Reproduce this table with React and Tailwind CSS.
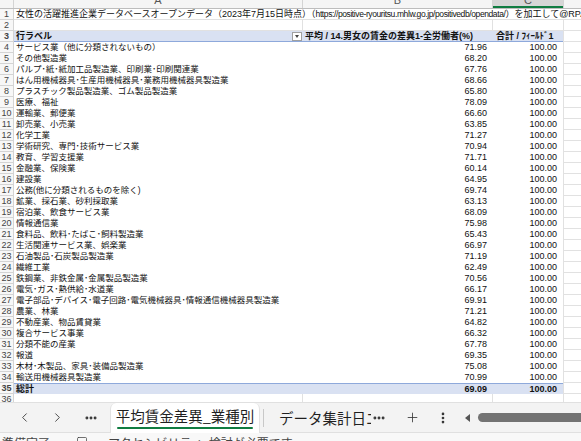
import { ChevronLeft, ChevronRight, Ellipsis, Plus, EllipsisVertical, Square } from 'lucide-react';

const rows = [
  ['サービス業（他に分類されないもの）', '71.96'],
  ['その他製造業', '68.20'],
  ['パルプ・紙・紙加工品製造業、印刷業・印刷関連業', '67.76'],
  ['はん用機械器具・生産用機械器具・業務用機械器具製造業', '68.66'],
  ['プラスチック製品製造業、ゴム製品製造業', '65.80'],
  ['医療、福祉', '78.09'],
  ['運輸業、郵便業', '66.60'],
  ['卸売業、小売業', '63.85'],
  ['化学工業', '71.27'],
  ['学術研究、専門・技術サービス業', '70.94'],
  ['教育、学習支援業', '71.71'],
  ['金融業、保険業', '60.14'],
  ['建設業', '64.95'],
  ['公務(他に分類されるものを除く)', '69.74'],
  ['鉱業、採石業、砂利採取業', '63.13'],
  ['宿泊業、飲食サービス業', '68.09'],
  ['情報通信業', '75.98'],
  ['食料品、飲料・たばこ・飼料製造業', '65.43'],
  ['生活関連サービス業、娯楽業', '66.97'],
  ['石油製品・石炭製品製造業', '71.19'],
  ['繊維工業', '62.49'],
  ['鉄鋼業、非鉄金属・金属製品製造業', '70.56'],
  ['電気・ガス・熱供給・水道業', '66.17'],
  ['電子部品・デバイス・電子回路・電気機械器具・情報通信機械器具製造業', '69.91'],
  ['農業、林業', '71.21'],
  ['不動産業、物品賃貸業', '64.82'],
  ['複合サービス事業', '66.32'],
  ['分類不能の産業', '67.78'],
  ['報道', '69.35'],
  ['木材・木製品、家具・装備品製造業', '75.08'],
  ['輸送用機械器具製造業', '70.99'],
];

function RowNum({ n }) {
  return (
    <div className="w-[14px] shrink-0 h-full border-r border-b border-[#d4d4d4] bg-[#f7f7f7] text-[#444] text-center">
      {n}
    </div>
  );
}

function DCell() {
  return <div className="flex-1 h-full border-l border-b border-[#e1e1e1]" />;
}

function ColumnHeader() {
  return (
    <div className="flex h-[9px] overflow-hidden border-b border-[#bdbdbd] bg-[#f5f5f5] text-[#555] text-[11px] leading-none">
      <div className="w-[14px] shrink-0 border-r border-[#d4d4d4]" />
      <div className="w-[289px] shrink-0 border-r border-[#d4d4d4] text-center -mt-[5px]">A</div>
      <div className="w-[190px] shrink-0 border-r border-[#d4d4d4] text-center -mt-[5px]">B</div>
      <div className="w-[70px] shrink-0 bg-[#d6d6d6] border-b-2 border-[#107c41] text-center -mt-[5px] pt-[5px]">
        <div className="-mt-[5px]">C</div>
      </div>
      <div className="flex-1 border-l border-[#d4d4d4]" />
    </div>
  );
}

function DataRow({ n, label, avg }) {
  return (
    <div className="flex h-[11px]">
      <RowNum n={n} />
      <div className="w-[289px] shrink-0 pl-[2px] whitespace-nowrap overflow-hidden text-[8.5px]">
        {label.replaceAll('・', '･')}
      </div>
      <div className="w-[190px] shrink-0 pr-[6px] text-right">{avg}</div>
      <div className="w-[70px] shrink-0 pr-[6px] text-right">100.00</div>
      <DCell />
    </div>
  );
}

function TabBar() {
  return (
    <div className="h-[31px] flex items-center bg-[#f3f3f3] border-t border-b border-[#e0e0e0] text-[#333] font-['Noto_Sans_CJK_JP',sans-serif]">
      <div className="pl-[8px] flex items-center">
        <div className="w-[33px] flex justify-center"><ChevronLeft size={15} strokeWidth={1.4} /></div>
        <div className="w-[33px] flex justify-center"><ChevronRight size={15} strokeWidth={1.4} /></div>
        <div className="w-[33px] flex justify-center"><Ellipsis size={14} strokeWidth={3} /></div>
      </div>
      <div className="ml-[3px] w-[150px] h-[30px] mt-[1px] bg-white rounded-t-[6px] border-x border-[#e2e2e2] flex flex-col items-center justify-center">
        <div className="text-[14.5px] leading-[18px] text-[#1f1f1f] whitespace-nowrap">平均賃金差異_業種別</div>
        <div className="mt-[2px] w-[136px] h-[2px] rounded bg-[#107c41]" />
      </div>
      <div className="ml-[3px] w-px h-[18px] bg-[#c8c8c8]" />
      <div className="ml-[15px] w-[92px] overflow-hidden whitespace-nowrap text-[14.5px] leading-[18px] text-[#1f1f1f]">データ集計日エリア</div>
      <div className="w-[16px] flex justify-center"><Ellipsis size={14} strokeWidth={3} /></div>
      <div className="ml-[17px] w-[16px] flex justify-center"><Plus size={15} strokeWidth={1.3} /></div>
      <div className="ml-[15px] w-[16px] flex justify-center"><EllipsisVertical size={14} strokeWidth={2.6} /></div>
      <div className="ml-[14px] w-0 h-0 border-y-[4px] border-y-transparent border-r-[5px] border-r-[#555]" />
      <div className="ml-[8px] flex-1 h-[9px] rounded-l-full bg-[#737373]" />
    </div>
  );
}

export default function App() {
  return (
    <div className="w-[581px] h-[441px] overflow-hidden bg-white">
      <div className="h-[402px] overflow-hidden font-['Liberation_Sans','Noto_Sans_CJK_JP',sans-serif] text-[9px] leading-[10px] text-[#111]">
        <ColumnHeader />

        <div className="flex h-[11px]">
          <RowNum n={1} />
          <div className="flex-1 h-full border-b border-[#e1e1e1] pl-[2px] whitespace-nowrap overflow-hidden">
            女性の活躍推進企業データベースオープンデータ（2023年7月15日時点）（
            <span className="text-[8.5px] tracking-[-0.4px]">https://positive-ryouritsu.mhlw.go.jp/positivedb/opendata/</span>
            ）を加工して@RPA
          </div>
        </div>

        <div className="flex h-[11px]">
          <RowNum n={2} />
          <div className="w-[289px] shrink-0 border-r border-b border-[#e1e1e1]" />
          <div className="w-[190px] shrink-0 border-r border-b border-[#e1e1e1]" />
          <div className="w-[70px] shrink-0 border-b border-[#e1e1e1]" />
          <DCell />
        </div>

        <div className="flex h-[11px] font-bold">
          <RowNum n={3} />
          <div className="flex w-[549px] shrink-0 h-full bg-[#d9e1f2] border-b border-[#8ea9db]">
            <div className="w-[289px] shrink-0 pl-[2px] flex items-center justify-between pr-[1px]">
              <span>行ラベル</span>
              <span className="w-[10px] h-[9px] bg-white border border-[#a0a0a0] flex items-center justify-center">
                <span className="w-0 h-0 border-x-[2.5px] border-x-transparent border-t-[3px] border-t-[#444]" />
              </span>
            </div>
            <div className="w-[190px] shrink-0 pl-[2px] whitespace-nowrap">平均 / 14.男女の賃金の差異1-全労働者(%)</div>
            <div className="w-[70px] shrink-0 pl-[3px] whitespace-nowrap">合計 / ﾌｨｰﾙﾄﾞ1</div>
          </div>
          <DCell />
        </div>

        {rows.map((r, i) => (
          <DataRow key={i} n={i + 4} label={r[0]} avg={r[1]} />
        ))}

        <div className="flex h-[11px] font-bold">
          <RowNum n={35} />
          <div className="flex w-[549px] shrink-0 h-full bg-[#d9e1f2] border-t border-[#8ea9db]">
            <div className="w-[289px] shrink-0 pl-[2px]">総計</div>
            <div className="w-[190px] shrink-0 pr-[6px] text-right">69.09</div>
            <div className="w-[70px] shrink-0 pr-[6px] text-right">100.00</div>
          </div>
          <DCell />
        </div>

        <div className="flex h-[11px]">
          <RowNum n={36} />
          <div className="w-[289px] shrink-0 border-r border-b border-[#e1e1e1]" />
          <div className="w-[190px] shrink-0 border-r border-b border-[#e1e1e1]" />
          <div className="w-[70px] shrink-0 border-b border-[#e1e1e1]" />
          <DCell />
        </div>
      </div>

      <TabBar />

      <div className="h-[22px] flex items-start pt-[3px] gap-[20px] pl-[2px] bg-[#f8f8f8] text-[12px] leading-[14px] text-[#444] font-['Noto_Sans_CJK_JP',sans-serif]">
        <span>準備完了</span>
        <Square size={12} strokeWidth={1.5} className="ml-[6px]" />
        <span>アクセシビリティ: 検討が必要です</span>
      </div>
    </div>
  );
}
